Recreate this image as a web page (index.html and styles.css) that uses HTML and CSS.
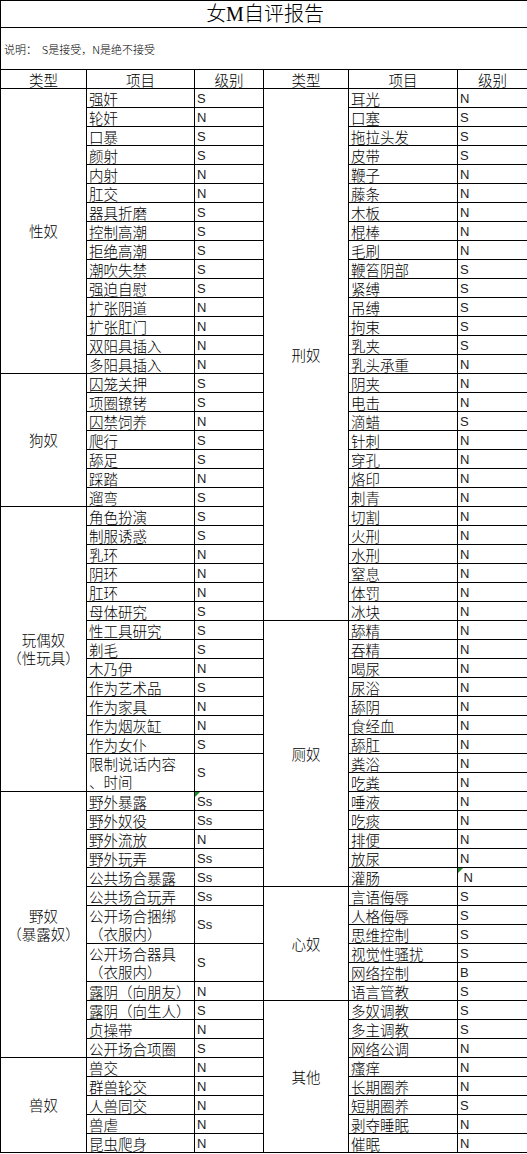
FILE: index.html
```html
<!DOCTYPE html>
<html lang="zh-CN">
<head>
<meta charset="utf-8">
<title>女M自评报告</title>
<link rel="stylesheet" href="styles.css">
</head>
<body>
<table class="sheet">
<colgroup><col class="c1"><col class="c2"><col class="c3"><col class="c4"><col class="c5"><col class="c6"></colgroup>
<tr class="title-row"><td colspan="6" class="title">女M自评报告</td></tr>
<tr class="note-row"><td colspan="6" class="note">说明：&nbsp; S是接受，N是绝不接受</td></tr>
<tr class="head"><td>类型</td><td>项目</td><td>级别</td><td>类型</td><td>项目</td><td>级别</td></tr>
<tr><td class="type" rowspan="15">性奴</td><td>强奸</td><td class="lv">S</td><td class="type" rowspan="28">刑奴</td><td>耳光</td><td class="lv">N</td></tr>
<tr><td>轮奸</td><td class="lv">N</td><td>口塞</td><td class="lv">S</td></tr>
<tr><td>口暴</td><td class="lv">S</td><td>拖拉头发</td><td class="lv">S</td></tr>
<tr><td>颜射</td><td class="lv">S</td><td>皮带</td><td class="lv">S</td></tr>
<tr><td>内射</td><td class="lv">N</td><td>鞭子</td><td class="lv">N</td></tr>
<tr><td>肛交</td><td class="lv">N</td><td>藤条</td><td class="lv">N</td></tr>
<tr><td>器具折磨</td><td class="lv">S</td><td>木板</td><td class="lv">N</td></tr>
<tr><td>控制高潮</td><td class="lv">S</td><td>棍棒</td><td class="lv">N</td></tr>
<tr><td>拒绝高潮</td><td class="lv">S</td><td>毛刷</td><td class="lv">N</td></tr>
<tr><td>潮吹失禁</td><td class="lv">S</td><td>鞭笞阴部</td><td class="lv">S</td></tr>
<tr><td>强迫自慰</td><td class="lv">S</td><td>紧缚</td><td class="lv">S</td></tr>
<tr><td>扩张阴道</td><td class="lv">N</td><td>吊缚</td><td class="lv">S</td></tr>
<tr><td>扩张肛门</td><td class="lv">N</td><td>拘束</td><td class="lv">S</td></tr>
<tr><td>双阳具插入</td><td class="lv">N</td><td>乳夹</td><td class="lv">S</td></tr>
<tr><td>多阳具插入</td><td class="lv">N</td><td>乳头承重</td><td class="lv">N</td></tr>
<tr><td class="type" rowspan="7">狗奴</td><td>囚笼关押</td><td class="lv">S</td><td>阴夹</td><td class="lv">N</td></tr>
<tr><td>项圈镣铐</td><td class="lv">S</td><td>电击</td><td class="lv">N</td></tr>
<tr><td>囚禁饲养</td><td class="lv">N</td><td>滴蜡</td><td class="lv">S</td></tr>
<tr><td>爬行</td><td class="lv">S</td><td>针刺</td><td class="lv">N</td></tr>
<tr><td>舔足</td><td class="lv">S</td><td>穿孔</td><td class="lv">N</td></tr>
<tr><td>踩踏</td><td class="lv">N</td><td>烙印</td><td class="lv">N</td></tr>
<tr><td>遛弯</td><td class="lv">S</td><td>刺青</td><td class="lv">N</td></tr>
<tr><td class="type" rowspan="15"><span class="line">玩偶奴</span><span class="line">（性玩具）</span></td><td>角色扮演</td><td class="lv">S</td><td>切割</td><td class="lv">N</td></tr>
<tr><td>制服诱惑</td><td class="lv">S</td><td>火刑</td><td class="lv">N</td></tr>
<tr><td>乳环</td><td class="lv">N</td><td>水刑</td><td class="lv">N</td></tr>
<tr><td>阴环</td><td class="lv">N</td><td>窒息</td><td class="lv">N</td></tr>
<tr><td>肛环</td><td class="lv">N</td><td>体罚</td><td class="lv">N</td></tr>
<tr><td>母体研究</td><td class="lv">S</td><td>冰块</td><td class="lv">N</td></tr>
<tr><td>性工具研究</td><td class="lv">S</td><td class="type" rowspan="14">厕奴</td><td>舔精</td><td class="lv">N</td></tr>
<tr><td>剃毛</td><td class="lv">S</td><td>吞精</td><td class="lv">N</td></tr>
<tr><td>木乃伊</td><td class="lv">N</td><td>喝尿</td><td class="lv">N</td></tr>
<tr><td>作为艺术品</td><td class="lv">S</td><td>尿浴</td><td class="lv">N</td></tr>
<tr><td>作为家具</td><td class="lv">N</td><td>舔阴</td><td class="lv">N</td></tr>
<tr><td>作为烟灰缸</td><td class="lv">N</td><td>食经血</td><td class="lv">N</td></tr>
<tr><td>作为女仆</td><td class="lv">S</td><td>舔肛</td><td class="lv">N</td></tr>
<tr><td rowspan="2" class="wrap"><span class="line">限制说话内容</span><span class="line">、时间</span></td><td rowspan="2" class="lv mid">S</td><td>粪浴</td><td class="lv">N</td></tr>
<tr><td>吃粪</td><td class="lv">N</td></tr>
<tr><td class="type" rowspan="14"><span class="line">野奴</span><span class="line">（暴露奴）</span></td><td>野外暴露</td><td class="lv mark">Ss</td><td>唾液</td><td class="lv">N</td></tr>
<tr><td>野外奴役</td><td class="lv">Ss</td><td>吃痰</td><td class="lv">N</td></tr>
<tr><td>野外流放</td><td class="lv">N</td><td>排便</td><td class="lv">N</td></tr>
<tr><td>野外玩弄</td><td class="lv">Ss</td><td>放尿</td><td class="lv">N</td></tr>
<tr><td>公共场合暴露</td><td class="lv">Ss</td><td>灌肠</td><td class="lv mark">&nbsp;N</td></tr>
<tr><td>公共场合玩弄</td><td class="lv">Ss</td><td class="type" rowspan="6">心奴</td><td>言语侮辱</td><td class="lv">S</td></tr>
<tr><td rowspan="2" class="wrap"><span class="line">公开场合捆绑</span><span class="line">（衣服内）</span></td><td rowspan="2" class="lv mid">Ss</td><td>人格侮辱</td><td class="lv">S</td></tr>
<tr><td>思维控制</td><td class="lv">S</td></tr>
<tr><td rowspan="2" class="wrap"><span class="line">公开场合器具</span><span class="line">（衣服内）</span></td><td rowspan="2" class="lv mid">S</td><td>视觉性骚扰</td><td class="lv">S</td></tr>
<tr><td>网络控制</td><td class="lv">B</td></tr>
<tr><td>露阴（向朋友）</td><td class="lv">N</td><td>语言管教</td><td class="lv">S</td></tr>
<tr><td>露阴（向生人）</td><td class="lv">S</td><td class="type" rowspan="8">其他</td><td>多奴调教</td><td class="lv">S</td></tr>
<tr><td>贞操带</td><td class="lv">N</td><td>多主调教</td><td class="lv">S</td></tr>
<tr><td>公开场合项圈</td><td class="lv">S</td><td>网络公调</td><td class="lv">N</td></tr>
<tr><td class="type" rowspan="5">兽奴</td><td>兽交</td><td class="lv">N</td><td>瘙痒</td><td class="lv">N</td></tr>
<tr><td>群兽轮交</td><td class="lv">N</td><td>长期圈养</td><td class="lv">N</td></tr>
<tr><td>人兽同交</td><td class="lv">N</td><td>短期圈养</td><td class="lv">S</td></tr>
<tr><td>兽虐</td><td class="lv">N</td><td>剥夺睡眠</td><td class="lv">N</td></tr>
<tr><td>昆虫爬身</td><td class="lv">N</td><td>催眠</td><td class="lv">N</td></tr>
</table>
</body>
</html>
```
FILE: styles.css
```css
html, body {
  margin: 0;
  padding: 0;
  background: #ffffff;
}

body {
  font-family: "Noto Sans CJK SC", "Liberation Sans", sans-serif;
  color: #000000;
}

.sheet {
  border-collapse: collapse;
  table-layout: fixed;
  width: 527px;
}

.c1 { width: 86px; }
.c2 { width: 108px; }
.c3 { width: 69px; }
.c4 { width: 85px; }
.c5 { width: 109px; }
.c6 { width: 70px; }

.sheet td {
  border: 1px solid #000000;
  padding: 0 0 0 2px;
  height: 18px;
  font-size: 14.5px;
  line-height: 17px;
  vertical-align: bottom;
  white-space: nowrap;
  overflow: hidden;
  font-weight: 300;
}

.sheet tr {
  height: 19px;
}

.sheet .line {
  display: block;
}

.sheet .title-row { height: 27px; }
.sheet .title {
  height: 26px;
  font-family: "Liberation Serif", "Noto Sans CJK SC", serif;
  font-size: 20px;
  line-height: 24px;
  text-align: center;
  vertical-align: middle;
}

.sheet .note-row { height: 42px; }
.sheet .note {
  height: 41px;
  font-size: 11px;
  line-height: 14px;
  vertical-align: middle;
  padding-left: 3px;
}

.sheet .head td {
  text-align: center;
  padding: 0;
}

.sheet .type {
  text-align: center;
  vertical-align: middle;
  padding: 0;
  line-height: 18px;
}

.sheet .lv {
  font-family: "Liberation Sans", sans-serif;
  font-size: 13px;
  font-weight: 400;
  color: #222222;
}

.sheet .mid {
  vertical-align: middle;
}

.sheet .wrap {
  line-height: 18px;
}

.sheet .mark {
  position: relative;
}

.sheet .mark::before {
  content: "";
  position: absolute;
  left: 0;
  top: 0;
  border-top: 5px solid #1f8a2a;
  border-right: 5px solid transparent;
}
```
